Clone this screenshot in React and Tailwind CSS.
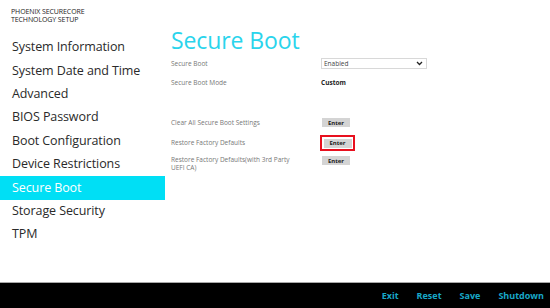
import React from "react";

const menu = [
  "System Information",
  "System Date and Time",
  "Advanced",
  "BIOS Password",
  "Boot Configuration",
  "Device Restrictions",
  "Secure Boot",
  "Storage Security",
  "TPM",
];

function EnterBtn({ hi }) {
  const btn = (
    <div className="flex h-[9px] w-[28px] items-center justify-center bg-[#d4d4d4] text-[6px] font-bold leading-none text-[#222]">
      Enter
    </div>
  );
  if (hi) {
    return <div className="border-2 border-[#e8101e] p-[1.5px]">{btn}</div>;
  }
  return <div className="pl-[1px]">{btn}</div>;
}

export default function App() {
  return (
    <div
      className="flex h-[308px] w-[550px] flex-col overflow-hidden bg-white"
      style={{ fontFamily: '"Open Sans", "Noto Sans", sans-serif' }}
    >
      <div className="flex flex-1">
        <aside className="w-[165px] pt-[8px]">
          <div className="pl-[11px] text-[7px] leading-[7.5px] tracking-[-0.1px] text-[#222]">
            <div>PHOENIX SECURECORE</div>
            <div>TECHNOLOGY SETUP</div>
          </div>
          <nav className="mt-[13px] flex flex-col">
            {menu.map((m) => (
              <div
                key={m}
                className={
                  "flex h-[23.4px] items-center pl-[12px] text-[12.5px] tracking-[-0.1px] " +
                  (m === "Secure Boot" ? "bg-[#00dff5] text-white" : "text-[#2a2a2a]")
                }
              >
                {m}
              </div>
            ))}
          </nav>
        </aside>
        <main className="flex-1 pl-[6px] pt-[26px]">
          <h1 className="text-[23px] leading-[28px] tracking-[-0.1px] text-[#2ad4ec]">Secure Boot</h1>
          <div className="mt-[4px] flex flex-col text-[6.5px] text-[#777]">
            <div className="flex h-[11px] items-center">
              <div className="w-[150px]">Secure Boot</div>
              <div className="flex h-[11px] w-[106px] items-center justify-between border border-[#d8d8d8] pl-[2px] pr-[3px] text-[#444]">
                <span>Enabled</span>
                <svg width="7" height="5" viewBox="0 0 7 5">
                  <path d="M1 1 L3.5 3.5 L6 1" fill="none" stroke="#222" strokeWidth="1.3" />
                </svg>
              </div>
            </div>
            <div className="mt-[8px] flex h-[11px] items-center">
              <div className="w-[150px]">Secure Boot Mode</div>
              <div className="font-bold text-[#222]">Custom</div>
            </div>
            <div className="mt-[29px] flex h-[11px] items-center">
              <div className="w-[150px]">Clear All Secure Boot Settings</div>
              <EnterBtn />
            </div>
            <div className="mt-[8px] flex h-[14px] items-center">
              <div className="w-[150px]">Restore Factory Defaults</div>
              <div className="-ml-[1px]">
                <EnterBtn hi />
              </div>
            </div>
            <div className="mt-[6px] flex items-start">
              <div className="w-[150px] leading-[7.5px]">
                <div>Restore Factory Defaults(with 3rd Party</div>
                <div>UEFI CA)</div>
              </div>
              <EnterBtn />
            </div>
          </div>
        </main>
      </div>
      <footer className="flex h-[26px] items-center justify-end border-t border-[#a8a8a8] bg-black pr-[6px] text-[9px] font-bold text-[#18a8c8]">
        <span className="mr-[18px]">Exit</span>
        <span className="mr-[18px]">Reset</span>
        <span className="mr-[18px]">Save</span>
        <span>Shutdown</span>
      </footer>
    </div>
  );
}
